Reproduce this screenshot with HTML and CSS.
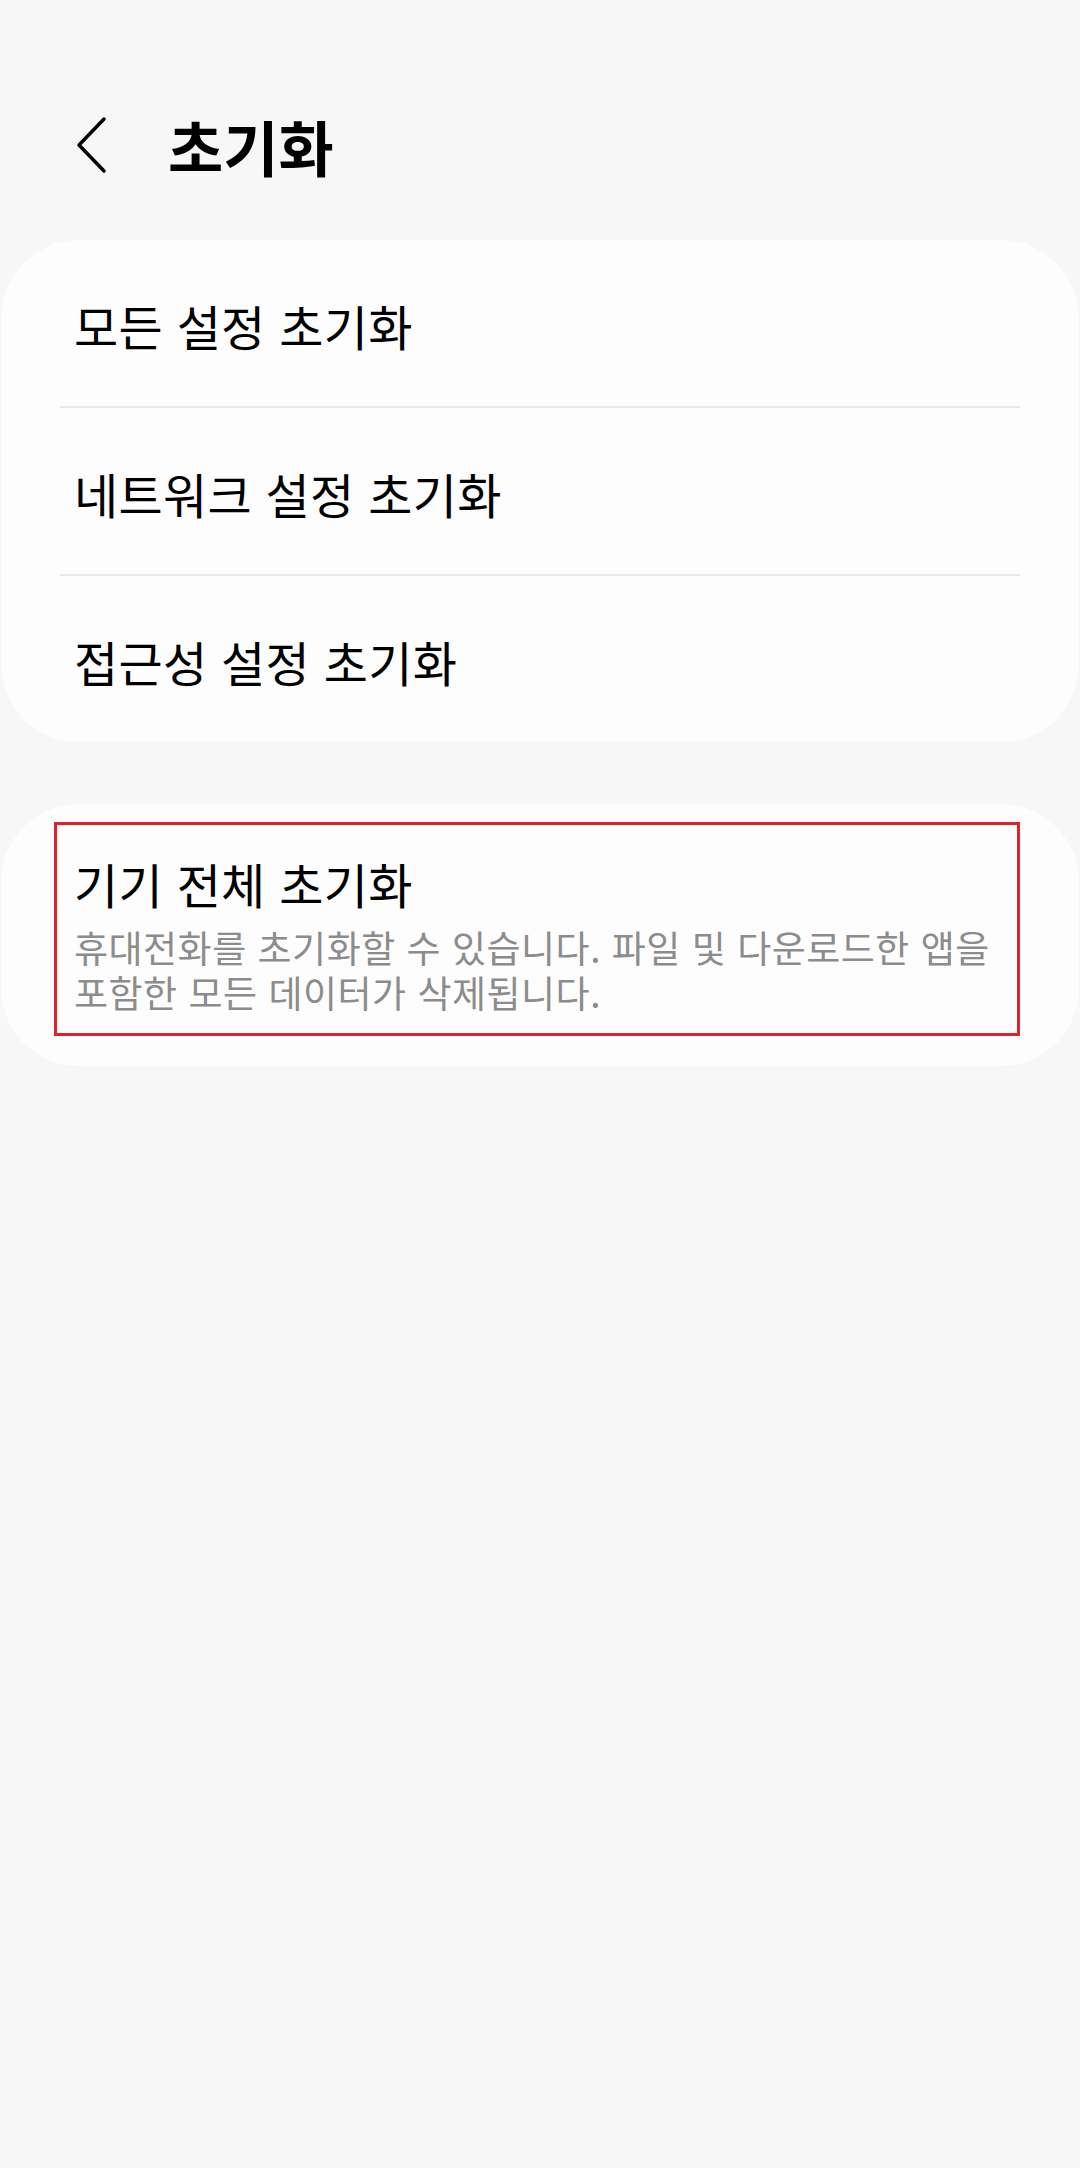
FILE: index.html
```html
<!doctype html>
<html lang="ko">
  <head>
    <meta charset="utf-8">
    <title>초기화</title>
    <link rel="stylesheet" href="styles.css">
  </head>
  <body>
    <header class="app-bar">
      <button class="back-button" aria-label="뒤로">
        <svg width="32" height="58" viewBox="0 0 32 58">
          <polyline points="28,3 3,29 28,55" />
        </svg>
      </button>
      <h1 class="app-title">초기화</h1>
    </header>

    <section class="card">
      <div class="list-item">모든 설정 초기화</div>
      <div class="divider"></div>
      <div class="list-item">네트워크 설정 초기화</div>
      <div class="divider"></div>
      <div class="list-item">접근성 설정 초기화</div>
    </section>

    <section class="card factory-card">
      <div class="factory-item">
        <div class="item-title">기기 전체 초기화</div>
        <div class="item-summary">휴대전화를 초기화할 수 있습니다. 파일 및 다운로드한 앱을 포함한 모든 데이터가 삭제됩니다.</div>
      </div>
    </section>
  </body>
</html>
```

FILE: styles.css
```css
body {
  margin: 0;
  background: #f7f7f7;
  font-family: "Noto Sans CJK KR", "Noto Sans", sans-serif;
  color: #000;
}

.app-bar {
  height: 240px;
  display: flex;
  align-items: center;
  padding: 50px 0 0 76px;
  box-sizing: border-box;
}

.back-button {
  border: none;
  background: none;
  padding: 0;
  margin: 0;
  width: 32px;
  height: 58px;
  display: flex;
}

.back-button polyline {
  fill: none;
  stroke: #000;
  stroke-width: 3.5px;
  stroke-linecap: round;
  stroke-linejoin: round;
}

.app-title {
  margin: 0 0 0 60px;
  font-size: 60px;
  font-weight: 700;
}

.card {
  margin: 0 1px;
  background: #fdfdfd;
  border-radius: 78px;
}

.list-item {
  height: 166px;
  box-sizing: border-box;
  padding: 4px 0 0 73px;
  display: flex;
  align-items: center;
  font-size: 48px;
  letter-spacing: 0.3px;
}

.divider {
  height: 2px;
  margin: 0 59px 0 59px;
  background: #e9e9e9;
}

.factory-card {
  margin-top: 62px;
  padding: 18px 59px 30px 53px;
}

.factory-item {
  border: 3px solid #e3212b;
  padding: 30px 20px 18px 17px;
}

.item-title {
  font-size: 48px;
  line-height: 56px;
  letter-spacing: 0.3px;
}

.item-summary {
  margin-top: 14px;
  font-size: 37px;
  line-height: 45px;
  letter-spacing: 0.5px;
  color: #8c8c8c;
  word-break: keep-all;
}
```
